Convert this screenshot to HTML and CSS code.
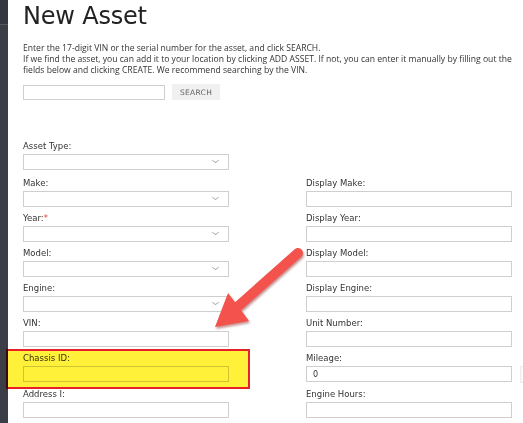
FILE: index.html
```html
<!doctype html>
<html>
    <head>
        <meta charset="UTF-8" />
        <title>New Asset</title>
        <link rel="stylesheet" href="styles.css">
    </head>
    <body>
        <div class="sidebar">
            <div class="sidebar-top"></div>
        </div>

        <div class="main">
            <h1>New Asset</h1>
            <p class="intro">
                Enter the 17-digit VIN or the serial number for the asset, and click SEARCH.<br>
                If we find the asset, you can add it to your location by clicking ADD ASSET. If not, you can enter it manually by filling out the<br>
                fields below and clicking CREATE. We recommend searching by the VIN.
            </p>

            <div class="search-row">
                <input class="search-input" type="text">
                <button class="search-button">SEARCH</button>
            </div>

            <!-- Asset form -->
            <div class="form-grid">
                <div class="field first">
                    <label>Asset Type:</label>
                    <div class="select"></div>
                </div>
                <div class="field first"></div>

                <div class="field">
                    <label>Make:</label>
                    <div class="select"></div>
                </div>
                <div class="field">
                    <label>Display Make:</label>
                    <input type="text">
                </div>

                <div class="field">
                    <label>Year:<span class="required">*</span></label>
                    <div class="select"></div>
                </div>
                <div class="field">
                    <label>Display Year:</label>
                    <input type="text">
                </div>

                <div class="field">
                    <label>Model:</label>
                    <div class="select"></div>
                </div>
                <div class="field">
                    <label>Display Model:</label>
                    <input type="text">
                </div>

                <div class="field">
                    <label>Engine:</label>
                    <div class="select"></div>
                </div>
                <div class="field">
                    <label>Display Engine:</label>
                    <input type="text">
                </div>

                <div class="field">
                    <label>VIN:</label>
                    <input type="text">
                </div>
                <div class="field">
                    <label>Unit Number:</label>
                    <input type="text">
                </div>

                <div class="field">
                    <label>Chassis ID:</label>
                    <input type="text">
                </div>
                <div class="field">
                    <label>Mileage:</label>
                    <div class="input-row">
                        <input type="text" value="0">
                        <div class="unit-box"></div>
                    </div>
                </div>

                <div class="field">
                    <label>Address I:</label>
                    <input type="text">
                </div>
                <div class="field">
                    <label>Engine Hours:</label>
                    <input type="text">
                </div>
            </div>
        </div>

        <!-- Annotation overlays -->
        <div class="highlight"></div>
        <svg class="arrow" viewBox="0 0 110 100" xmlns="http://www.w3.org/2000/svg">
            <line x1="98" y1="13" x2="35" y2="69" stroke="#f4524d" stroke-width="10" stroke-linecap="round" />
            <path fill="#f4524d" d="M15 87 L28 53 L38 66 L49 81 Z" />
        </svg>
    </body>
</html>
```

FILE: styles.css
```css
body {
    font-family: "DejaVu Sans", sans-serif;
    margin: 0;
    padding: 0;
    background-color: #ffffff;
    color: #333333;
    display: flex;
    width: 523px;
    height: 423px;
    overflow: hidden;
    position: relative;
}

.sidebar {
    width: 8px;
    flex-shrink: 0;
    background-color: #3b3e47;
}

.sidebar-top {
    height: 24px;
    background-color: #34373f;
    border-bottom: 1px solid #55585f;
}

.main {
    padding-left: 15px;
    flex: 1;
}

h1 {
    font-size: 24px;
    font-weight: normal;
    color: #222222;
    margin: 3px 0 0;
    line-height: 26px;
    letter-spacing: -0.2px;
}

.intro {
    font-family: "Open Sans", sans-serif;
    font-size: 8.6px;
    line-height: 11px;
    color: #333333;
    margin: 14px 0 0;
    white-space: nowrap;
}

.search-row {
    display: flex;
    align-items: center;
    margin-top: 8px;
}

.search-input {
    width: 142px;
    height: 15px;
    box-sizing: border-box;
    border: 1px solid #cfcfcf;
    margin: 0;
    padding: 0;
}

.search-button {
    margin-left: 7px;
    width: 48px;
    height: 16px;
    padding: 0;
    border: none;
    background-color: #f0f0f0;
    color: #666666;
    font-family: "DejaVu Sans", sans-serif;
    font-size: 7.5px;
    letter-spacing: 0.3px;
}

.form-grid {
    display: grid;
    grid-template-columns: 206px 206px;
    column-gap: 77px;
    row-gap: 6px;
    margin-top: 41px;
}

.field.first {
    margin-bottom: 2px;
}

.field label {
    display: block;
    font-size: 8.5px;
    line-height: 10px;
    height: 10px;
    margin-bottom: 3px;
    color: #333333;
}

.required {
    color: #e53935;
}

.field input,
.select {
    display: block;
    width: 206px;
    height: 16px;
    box-sizing: border-box;
    border: 1px solid #cfcfcf;
    margin: 0;
    padding: 0 0 0 6px;
    background-color: #ffffff;
    font-family: "DejaVu Sans", sans-serif;
    font-size: 8px;
    color: #333333;
}

.select {
    position: relative;
}

.select::after {
    content: "";
    position: absolute;
    right: 10px;
    top: 3px;
    width: 4px;
    height: 4px;
    border-right: 1px solid #a8a8a8;
    border-bottom: 1px solid #a8a8a8;
    transform: scaleY(0.7) rotate(45deg);
}

.input-row {
    display: flex;
    width: 206px;
    gap: 8px;
}

.input-row input {
    flex-shrink: 0;
}

.unit-box {
    width: 3px;
    height: 15px;
    flex-shrink: 0;
    border: 1px solid #ececec;
    border-right: none;
    background-color: #fafafa;
}

.highlight {
    position: absolute;
    left: 6px;
    top: 349px;
    width: 240px;
    height: 36px;
    border: 2px solid #e8202a;
    background-color: #fff03a;
    mix-blend-mode: multiply;
}

.arrow {
    position: absolute;
    left: 200px;
    top: 240px;
    width: 110px;
    height: 100px;
    filter: drop-shadow(1px 2px 1px rgba(130, 20, 20, 0.45));
}
```
